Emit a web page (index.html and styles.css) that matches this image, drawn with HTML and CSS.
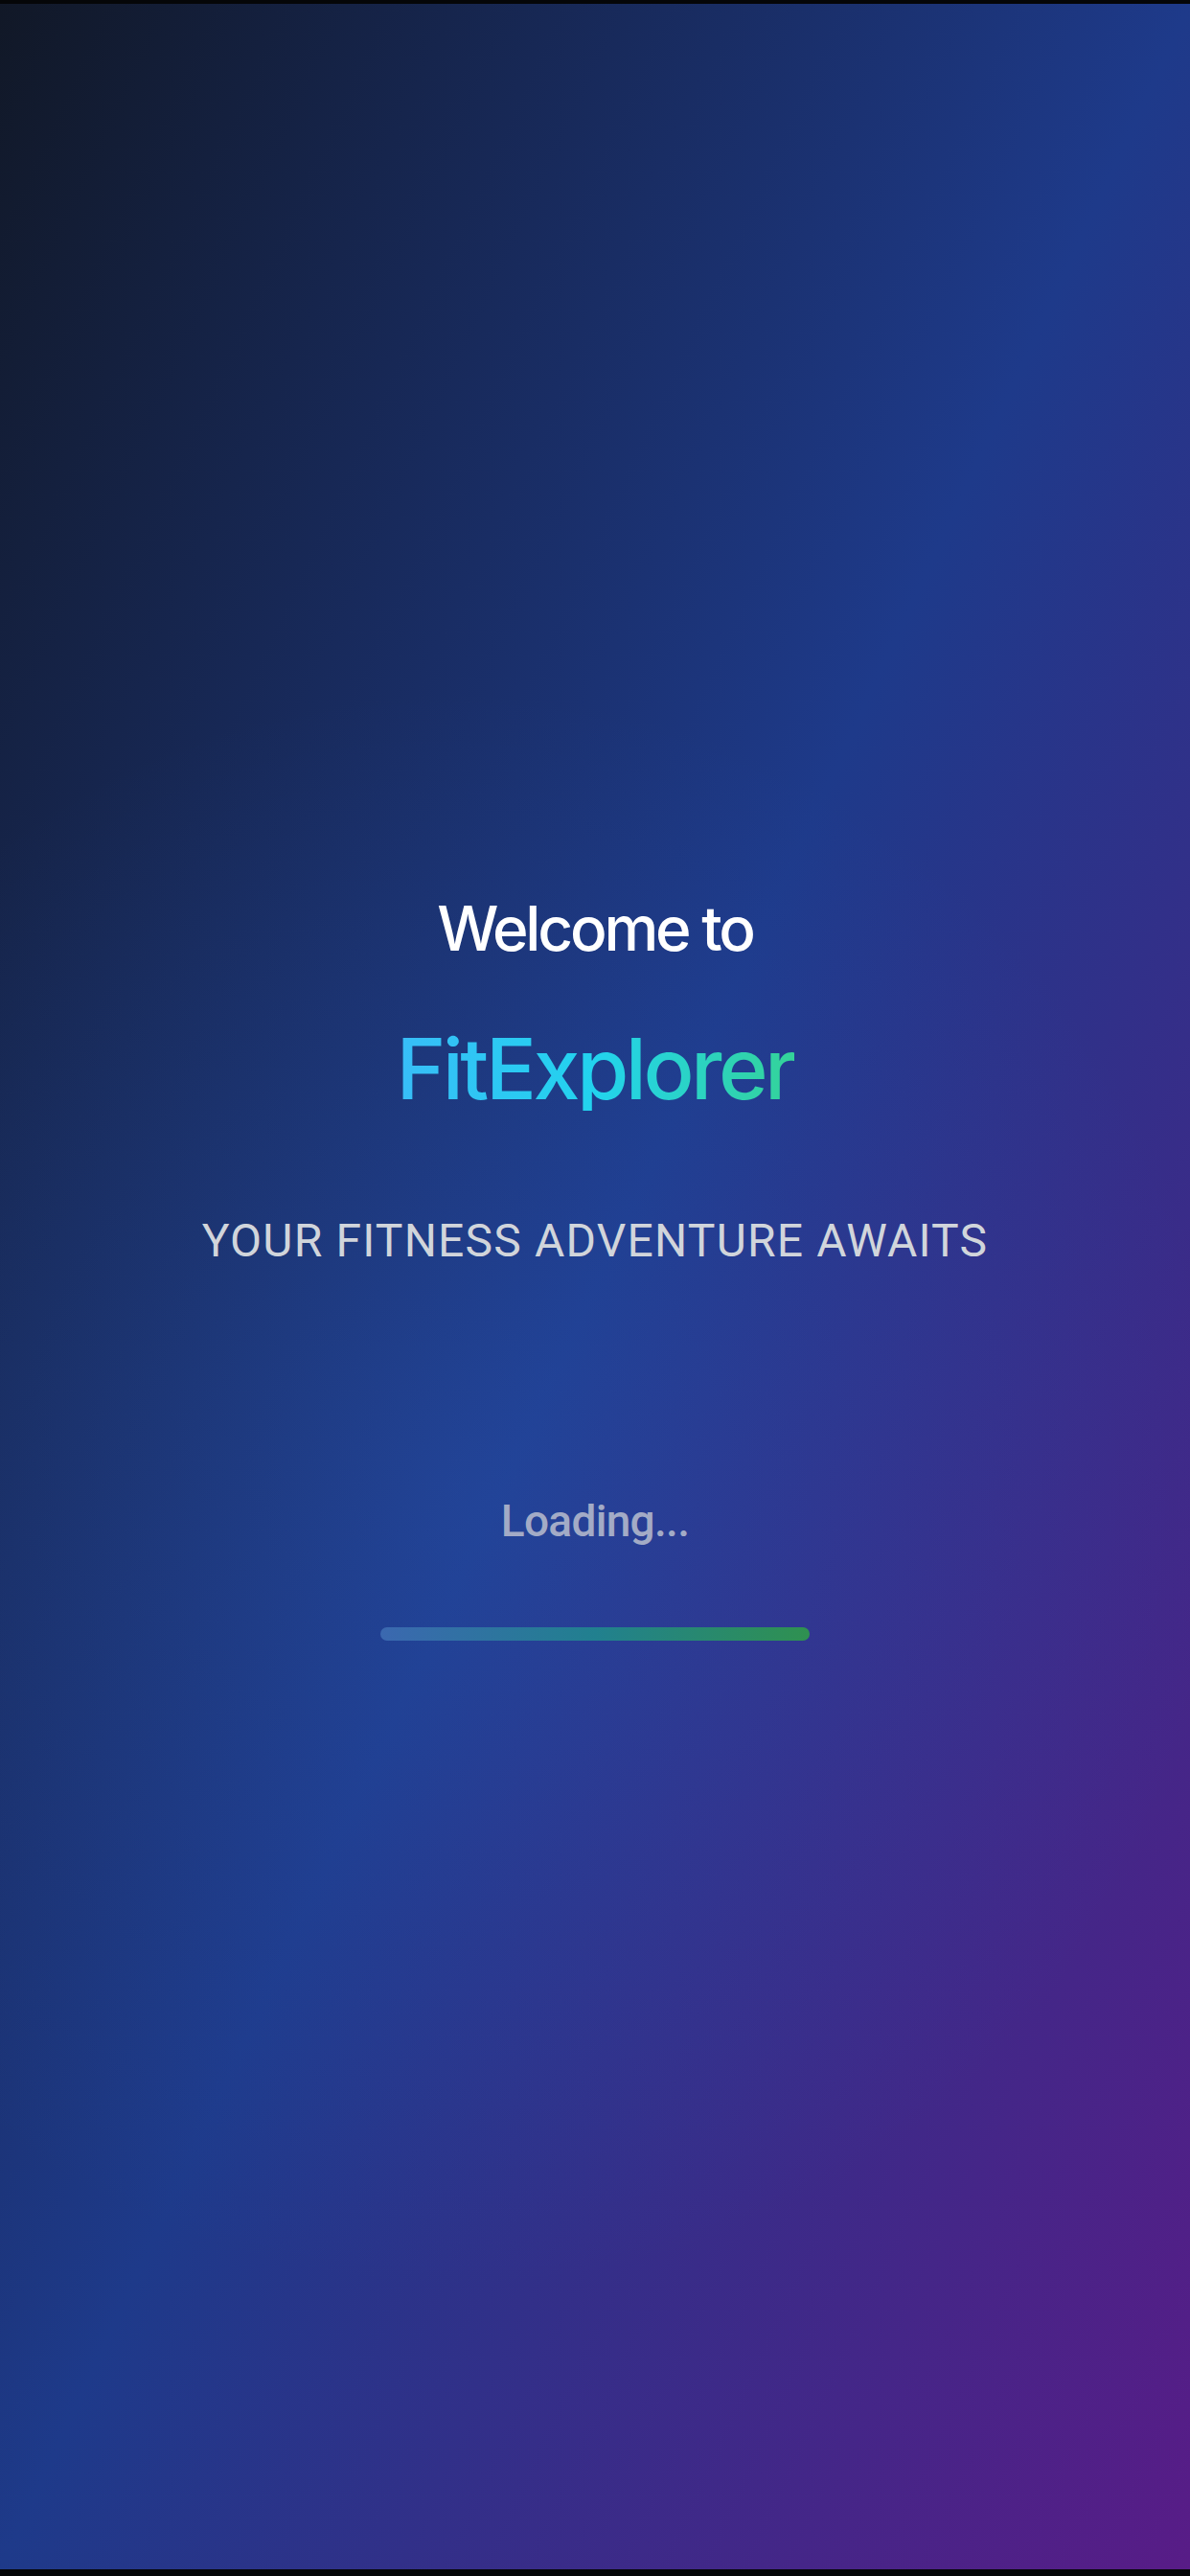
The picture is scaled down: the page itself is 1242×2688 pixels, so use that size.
FILE: index.html
```html
<!DOCTYPE html>
<html lang="en">
<head>
<meta charset="utf-8">
<title>FitExplorer</title>
<link rel="stylesheet" href="styles.css">
</head>
<body>
<div class="frame">
  <main class="splash">
    <div class="glow"></div>
    <div class="content">
      <h2 class="welcome">Welcome to</h2>
      <h1 class="brand">FitExplorer</h1>
      <p class="tagline">YOUR FITNESS ADVENTURE AWAITS</p>
      <p class="loading">Loading...</p>
      <div class="bar"></div>
    </div>
  </main>
</div>
</body>
</html>
```

FILE: styles.css
```css
html, body {
  margin: 0;
  padding: 0;
  background: #000;
}
.frame {
  width: 1242px;
  height: 2688px;
  padding: 4px 0 7px;
  box-sizing: border-box;
  display: flex;
  flex-direction: column;
  background: #050608;
}
.splash {
  flex: 1;
  position: relative;
  overflow: hidden;
  background: linear-gradient(to bottom right, #111827 0%, #1e3a8a 50%, #581c87 100%);
  display: flex;
  flex-direction: column;
  align-items: center;
  justify-content: center;
  padding-bottom: 38px;
}
.glow {
  position: absolute;
  left: -200px;
  top: 700px;
  width: 1500px;
  height: 1700px;
  background: radial-gradient(ellipse at 45% 50%, rgba(59, 130, 246, 0.14) 0%, rgba(59, 130, 246, 0.06) 40%, rgba(59, 130, 246, 0) 70%);
  pointer-events: none;
}
.content {
  position: relative;
  display: flex;
  flex-direction: column;
  align-items: center;
}
.welcome {
  margin: 2px 0 0;
  font-family: Inter, "Liberation Sans", sans-serif;
  font-weight: 500;
  font-size: 64px;
  line-height: 1;
  letter-spacing: -0.05em;
  color: #ffffff;
}
.brand {
  margin: 70px 0 0;
  font-family: Inter, "Liberation Sans", sans-serif;
  font-weight: 500;
  font-size: 88px;
  line-height: 1;
  letter-spacing: -0.04em;
  background: linear-gradient(to right, #38bdf8 0%, #22d3ee 50%, #34d399 100%);
  -webkit-background-clip: text;
  background-clip: text;
  color: transparent;
}
.tagline {
  margin: 112px 0 0;
  font-family: Roboto, "Liberation Sans", sans-serif;
  font-weight: 400;
  font-size: 48px;
  line-height: 1;
  letter-spacing: 0.025em;
  color: #d1d5db;
}
.loading {
  margin: 245px 0 0;
  font-family: Roboto, "Liberation Sans", sans-serif;
  font-weight: 500;
  font-size: 46px;
  line-height: 1;
  letter-spacing: -0.015em;
  color: #a3abc6;
}
.bar {
  margin-top: 88px;
  width: 448px;
  height: 14px;
  border-radius: 7px;
  background: linear-gradient(to right, #3b68b0 0%, #21808f 50%, #2f9150 100%);
}
```
